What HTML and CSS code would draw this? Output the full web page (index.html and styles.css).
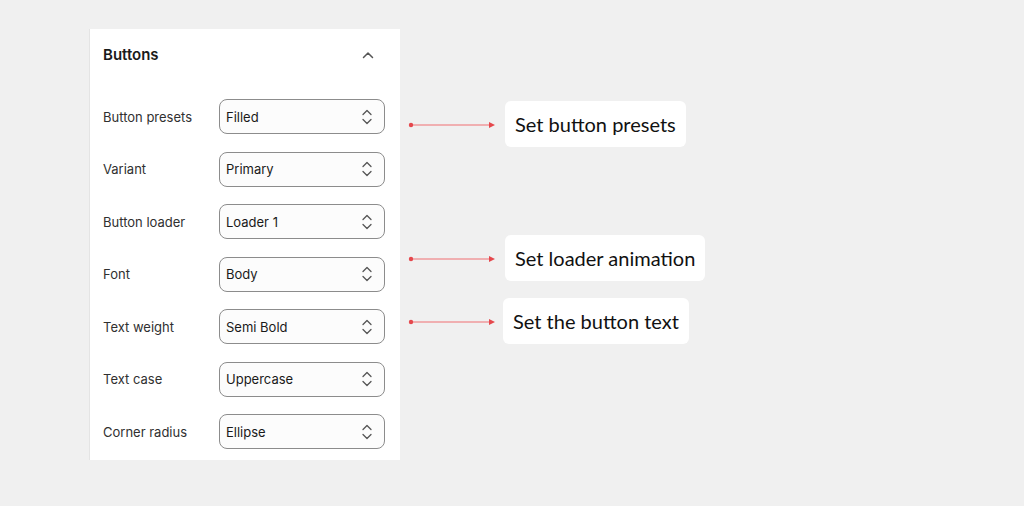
FILE: index.html
```html
<!DOCTYPE html>
<html lang="en">
<head>
  <meta charset="UTF-8" />
  <meta name="viewport" content="width=device-width, initial-scale=1.0"/>
  <title>Buttons settings</title>
  <link rel="stylesheet" href="styles.css">
</head>
<body>
  <div class="page">
    <div class="panel">
      <div class="panel-head">
        <h2>Buttons</h2>
        <svg class="collapse" width="14" height="14" viewBox="0 0 14 14">
          <path d="M2.5 9.5 7 5l4.5 4.5" fill="none" stroke="#555" stroke-width="1.5" stroke-linecap="round" stroke-linejoin="round"/>
        </svg>
      </div>

      <div class="rows">
        <div class="row">
          <span class="label">Button presets</span>
          <div class="select"><span>Filled</span><svg class="updown" width="12" height="18" viewBox="0 0 12 18"><path d="M2 6.5 6 2.5l4 4M2 11.5l4 4 4-4" fill="none" stroke="#555" stroke-width="1.3" stroke-linecap="round" stroke-linejoin="round"/></svg></div>
        </div>
        <div class="row">
          <span class="label">Variant</span>
          <div class="select"><span>Primary</span><svg class="updown" width="12" height="18" viewBox="0 0 12 18"><path d="M2 6.5 6 2.5l4 4M2 11.5l4 4 4-4" fill="none" stroke="#555" stroke-width="1.3" stroke-linecap="round" stroke-linejoin="round"/></svg></div>
        </div>
        <div class="row">
          <span class="label">Button loader</span>
          <div class="select"><span>Loader 1</span><svg class="updown" width="12" height="18" viewBox="0 0 12 18"><path d="M2 6.5 6 2.5l4 4M2 11.5l4 4 4-4" fill="none" stroke="#555" stroke-width="1.3" stroke-linecap="round" stroke-linejoin="round"/></svg></div>
        </div>
        <div class="row">
          <span class="label">Font</span>
          <div class="select"><span>Body</span><svg class="updown" width="12" height="18" viewBox="0 0 12 18"><path d="M2 6.5 6 2.5l4 4M2 11.5l4 4 4-4" fill="none" stroke="#555" stroke-width="1.3" stroke-linecap="round" stroke-linejoin="round"/></svg></div>
        </div>
        <div class="row">
          <span class="label">Text weight</span>
          <div class="select"><span>Semi Bold</span><svg class="updown" width="12" height="18" viewBox="0 0 12 18"><path d="M2 6.5 6 2.5l4 4M2 11.5l4 4 4-4" fill="none" stroke="#555" stroke-width="1.3" stroke-linecap="round" stroke-linejoin="round"/></svg></div>
        </div>
        <div class="row">
          <span class="label">Text case</span>
          <div class="select"><span>Uppercase</span><svg class="updown" width="12" height="18" viewBox="0 0 12 18"><path d="M2 6.5 6 2.5l4 4M2 11.5l4 4 4-4" fill="none" stroke="#555" stroke-width="1.3" stroke-linecap="round" stroke-linejoin="round"/></svg></div>
        </div>
        <div class="row">
          <span class="label">Corner radius</span>
          <div class="select"><span>Ellipse</span><svg class="updown" width="12" height="18" viewBox="0 0 12 18"><path d="M2 6.5 6 2.5l4 4M2 11.5l4 4 4-4" fill="none" stroke="#555" stroke-width="1.3" stroke-linecap="round" stroke-linejoin="round"/></svg></div>
        </div>
      </div>
    </div>

    <div class="notes">
      <div class="note note-presets">
        <svg class="pointer" width="88" height="8" viewBox="0 0 88 8"><line x1="3" y1="4" x2="82" y2="4" stroke="#f19a9c" stroke-width="1.5"/><circle cx="3" cy="4" r="2.2" fill="#e5484d"/><path d="M81 1l6 3-6 3z" fill="#e5484d"/></svg>
        <div class="tag">Set button presets</div>
      </div>
      <div class="note note-loader">
        <svg class="pointer" width="88" height="8" viewBox="0 0 88 8"><line x1="3" y1="4" x2="82" y2="4" stroke="#f19a9c" stroke-width="1.5"/><circle cx="3" cy="4" r="2.2" fill="#e5484d"/><path d="M81 1l6 3-6 3z" fill="#e5484d"/></svg>
        <div class="tag">Set loader animation</div>
      </div>
      <div class="note note-text">
        <svg class="pointer" width="88" height="8" viewBox="0 0 88 8"><line x1="3" y1="4" x2="82" y2="4" stroke="#f19a9c" stroke-width="1.5"/><circle cx="3" cy="4" r="2.2" fill="#e5484d"/><path d="M81 1l6 3-6 3z" fill="#e5484d"/></svg>
        <div class="tag">Set the button text</div>
      </div>
    </div>
  </div>
</body>
</html>
```

FILE: styles.css
```css
* {
  box-sizing: border-box;
}

body {
  margin: 0;
  background: #f0f0f0;
  font-family: Inter, 'Noto Sans', sans-serif;
  color: #1a1a1a;
}

.page {
  display: flex;
  align-items: flex-start;
  gap: 8px;
  padding: 29px 0 0 89px;
}

/* settings panel */
.panel {
  width: 311px;
  background: #fff;
  border-left: 1px solid #e4e4e4;
  padding: 0 14px 11px 13px;
}

.panel-head {
  display: flex;
  align-items: center;
  justify-content: space-between;
  padding-right: 11px;
  height: 52px;
  margin-bottom: 18px;
}

.panel-head h2 {
  margin: 0;
  font-size: 15px;
  line-height: 20px;
  font-weight: 600;
  color: #1a1a1a;
}

.collapse {
  display: block;
}

.rows {
  display: flex;
  flex-direction: column;
  gap: 17.5px;
}

.row {
  display: flex;
  align-items: center;
}

.label {
  width: 116px;
  font-size: 13px;
  color: #303030;
}

.select {
  width: 166px;
  height: 35px;
  display: flex;
  align-items: center;
  justify-content: space-between;
  padding: 0 11px 0 6px;
  border: 1px solid #8c8c8c;
  border-radius: 8px;
  background: #fcfcfc;
  font-size: 13px;
  color: #1a1a1a;
}

.updown {
  display: block;
}

/* annotations */
.notes {
  display: flex;
  flex-direction: column;
  padding-top: 72px;
}

.note {
  display: flex;
  align-items: center;
  gap: 9px;
}

.note-loader {
  margin-top: 88px;
}

.note-text {
  margin-top: 17px;
}

.note-text .tag {
  margin-left: -2px;
}

.pointer {
  display: block;
  margin-top: 2px;
}

.tag {
  height: 46px;
  display: flex;
  align-items: center;
  padding: 0 10px;
  background: #fff;
  border-radius: 6px;
  font-family: Lato, 'Noto Sans', sans-serif;
  font-size: 20px;
  color: #111;
}
```
